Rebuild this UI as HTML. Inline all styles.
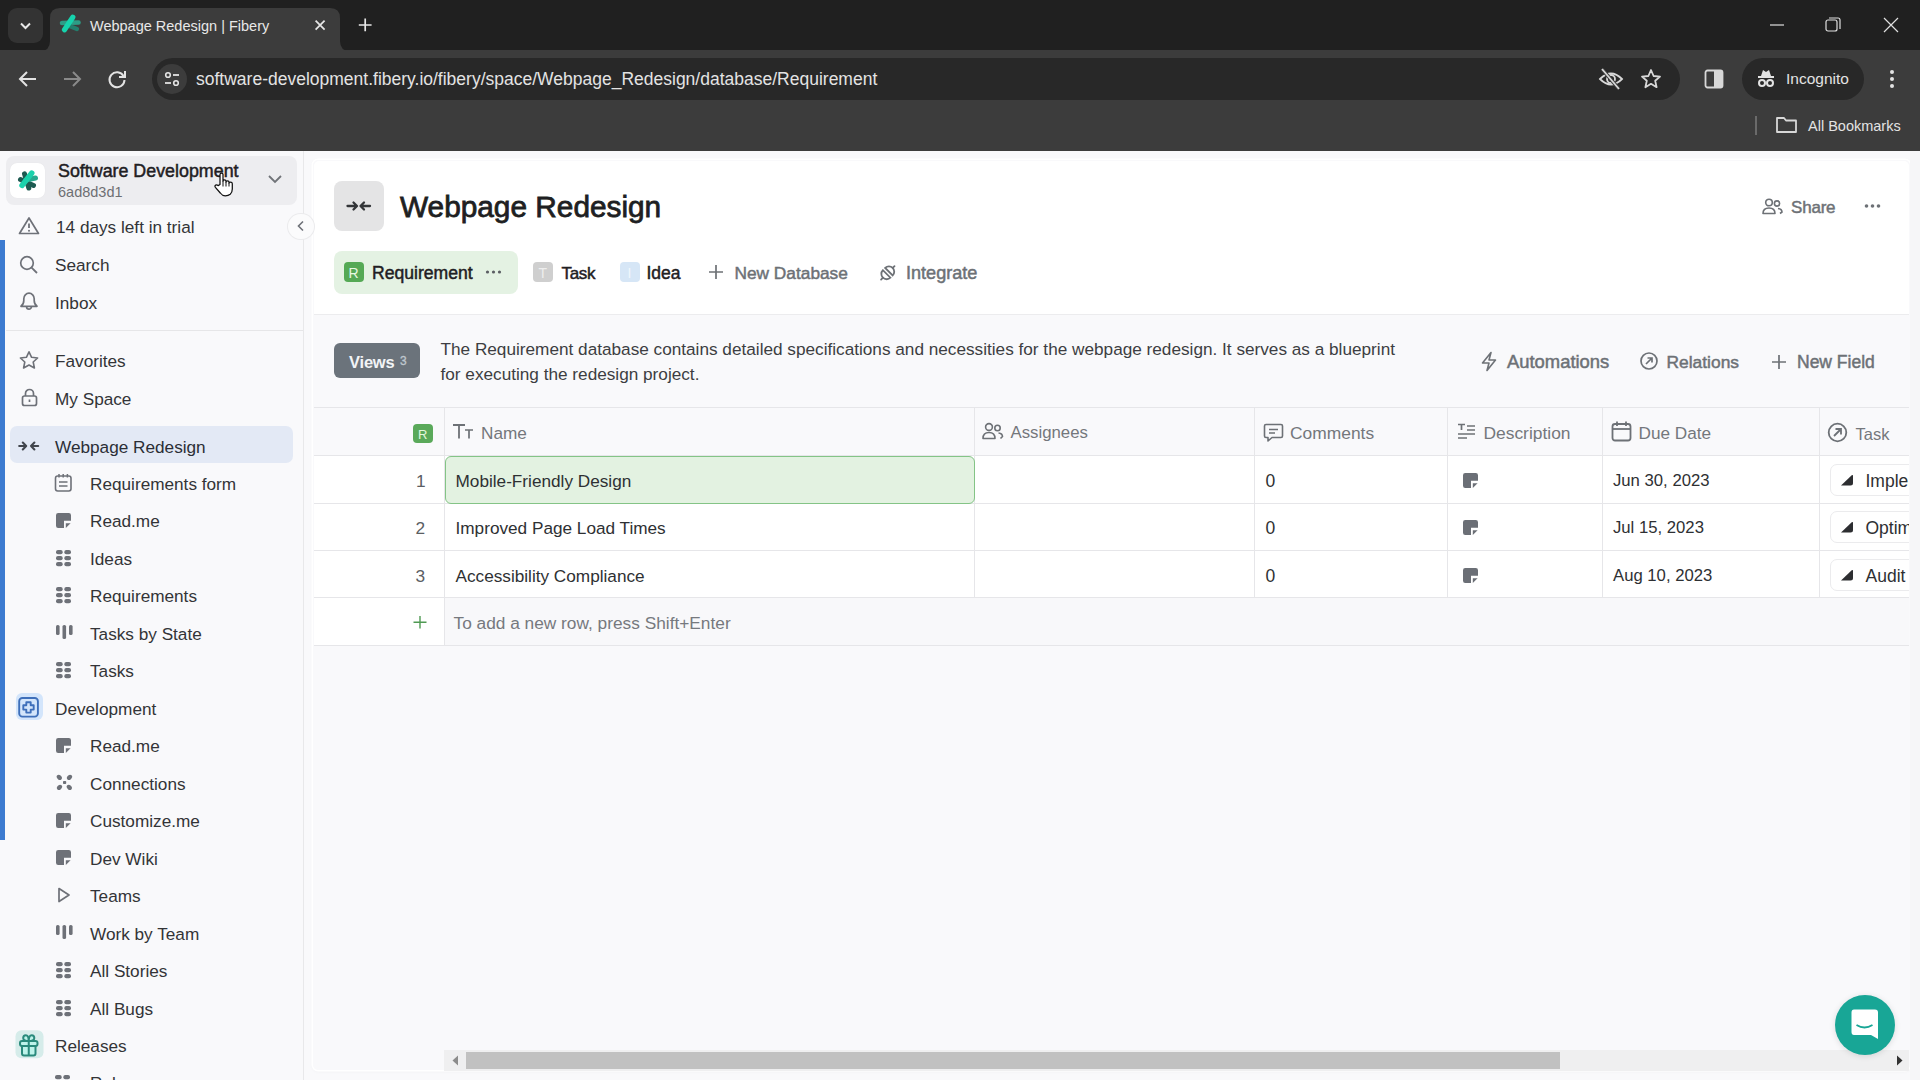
<!DOCTYPE html>
<html><head><meta charset="utf-8"><style>
html,body{margin:0;padding:0;width:1920px;height:1080px;overflow:hidden;background:#f7f7f9}
body{position:relative;font-family:"Liberation Sans", sans-serif}
.t{position:absolute;white-space:nowrap;line-height:1;font-family:"Liberation Sans", sans-serif}
svg{overflow:visible}
</style></head><body>
<div style="position:absolute;left:0px;top:0px;width:1920px;height:151px;background:#202020"></div>
<div style="position:absolute;left:0px;top:50px;width:1920px;height:101px;background:#3c3c3c"></div>
<div style="position:absolute;left:8px;top:8px;width:35px;height:35px;background:#333333;border-radius:9px"></div>
<svg style="position:absolute;left:17px;top:17px" width="17" height="17" viewBox="0 0 17 17"><path d="M4 6.5 L8.5 11 L13 6.5" stroke="#e8e8e8" stroke-width="2" fill="none"/></svg>
<svg style="position:absolute;left:40px;top:8px" width="310" height="43" viewBox="0 0 310 43"><path d="M0 43 Q10 43 10 33 L10 10 Q10 0 20 0 L290 0 Q300 0 300 10 L300 33 Q300 43 310 43 Z" fill="#3c3c3c"/></svg>
<svg style="position:absolute;left:55px;top:10px" width="30" height="30" viewBox="0 0 30 30"><g stroke-linecap="round"><path d="M7 13 L23.5 12.5" stroke="#2d9c86" stroke-width="4.6"/><path d="M13 15.5 L22 19" stroke="#237e6d" stroke-width="4.2"/><path d="M9.5 19.8 L17.8 7.2" stroke="#16d3ad" stroke-width="5.2"/></g></svg>
<div class="t" style="left:90px;top:18.73px;font-size:14.5px;color:#e8e8e8;font-weight:400;letter-spacing:0px;">Webpage Redesign | Fibery</div>
<svg style="position:absolute;left:312px;top:17px" width="16" height="16" viewBox="0 0 16 16"><path d="M3.6 3.6 L12.6 12.6 M12.6 3.6 L3.6 12.6" stroke="#e6e6e6" stroke-width="1.7"/></svg>
<svg style="position:absolute;left:356px;top:16px" width="18" height="18" viewBox="0 0 18 18"><path d="M9.2 2.6 V15.2 M2.8 9 H15.6" stroke="#e6e6e6" stroke-width="1.7"/></svg>
<svg style="position:absolute;left:1768px;top:15px" width="20" height="20" viewBox="0 0 20 20"><path d="M2 10 H16" stroke="#e0e0e0" stroke-width="1.2"/></svg>
<svg style="position:absolute;left:1823px;top:15px" width="20" height="20" viewBox="0 0 20 20"><rect x="3" y="5" width="11" height="11" rx="2" stroke="#e0e0e0" stroke-width="1.2" fill="none"/><path d="M6 3 H15 Q17 3 17 5 V14" stroke="#e0e0e0" stroke-width="1.2" fill="none"/></svg>
<svg style="position:absolute;left:1881px;top:15px" width="20" height="20" viewBox="0 0 20 20"><path d="M3 3 L17 17 M17 3 L3 17" stroke="#e0e0e0" stroke-width="1.2"/></svg>
<svg style="position:absolute;left:17px;top:68px" width="22" height="22" viewBox="0 0 22 22"><path d="M19 11 H4 M10 4 L3 11 L10 18" stroke="#e3e3e3" stroke-width="2" fill="none"/></svg>
<svg style="position:absolute;left:61px;top:68px" width="22" height="22" viewBox="0 0 22 22"><path d="M3 11 H18 M12 4 L19 11 L12 18" stroke="#8a8a8a" stroke-width="2" fill="none"/></svg>
<svg style="position:absolute;left:106px;top:68px" width="22" height="22" viewBox="0 0 22 22"><path d="M17.5 8 A7.5 7.5 0 1 0 18.5 12" stroke="#e3e3e3" stroke-width="2" fill="none"/><path d="M19 3 V9 H13" stroke="#e3e3e3" stroke-width="2" fill="none"/></svg>
<div style="position:absolute;left:152px;top:58px;width:1528px;height:42px;background:#282828;border-radius:21px"></div>
<div style="position:absolute;left:157px;top:64px;width:30px;height:30px;background:#3c3c3c;border-radius:15px"></div>
<svg style="position:absolute;left:162px;top:69px" width="20" height="20" viewBox="0 0 20 20"><circle cx="6" cy="6" r="2.3" stroke="#e3e3e3" stroke-width="1.6" fill="none"/><path d="M11 6 H17" stroke="#e3e3e3" stroke-width="1.8"/><circle cx="14" cy="14" r="2.3" stroke="#e3e3e3" stroke-width="1.6" fill="none"/><path d="M3 14 H9" stroke="#e3e3e3" stroke-width="1.8"/></svg>
<div class="t" style="left:196px;top:70.69px;font-size:17.5px;color:#e3e3e3;font-weight:400;letter-spacing:0px;">software-development.fibery.io/fibery/space/Webpage_Redesign/database/Requirement</div>
<svg style="position:absolute;left:1598px;top:67px" width="26" height="24" viewBox="0 0 26 24"><path d="M2 12 Q13 1 24 12 Q13 23 2 12Z" stroke="#d8d8d8" stroke-width="1.8" fill="none"/><circle cx="13" cy="12" r="4" stroke="#d8d8d8" stroke-width="1.8" fill="none"/><path d="M4 2 L21 22" stroke="#3c3c3c" stroke-width="3.5"/><path d="M4 2 L21 22" stroke="#d8d8d8" stroke-width="1.8"/></svg>
<svg style="position:absolute;left:1640px;top:68px" width="22" height="22" viewBox="0 0 22 22"><path d="M11 2 L13.6 8 L20 8.6 L15.2 12.8 L16.6 19.2 L11 15.8 L5.4 19.2 L6.8 12.8 L2 8.6 L8.4 8 Z" stroke="#d8d8d8" stroke-width="1.8" fill="none" stroke-linejoin="round"/></svg>
<svg style="position:absolute;left:1704px;top:69px" width="20" height="20" viewBox="0 0 20 20"><rect x="1.5" y="1.5" width="17" height="17" rx="2" stroke="#d8d8d8" stroke-width="1.8" fill="none"/><rect x="10" y="2" width="8" height="16" fill="#d8d8d8"/></svg>
<div style="position:absolute;left:1742px;top:58px;width:122px;height:42px;background:#282828;border-radius:21px"></div>
<svg style="position:absolute;left:1755px;top:68px" width="22" height="22" viewBox="0 0 22 22"><path d="M3 9 H19" stroke="#e3e3e3" stroke-width="2"/><path d="M6 8 L8 2 L11 4 L14 2 L16 8Z" fill="#e3e3e3"/><circle cx="7" cy="15" r="3" stroke="#e3e3e3" stroke-width="2" fill="none"/><circle cx="15" cy="15" r="3" stroke="#e3e3e3" stroke-width="2" fill="none"/></svg>
<div class="t" style="left:1786px;top:71.38px;font-size:15.5px;color:#e3e3e3;font-weight:400;letter-spacing:0px;">Incognito</div>
<svg style="position:absolute;left:1882px;top:68px" width="20" height="22" viewBox="0 0 20 22"><circle cx="10" cy="4" r="2" fill="#e3e3e3"/><circle cx="10" cy="11" r="2" fill="#e3e3e3"/><circle cx="10" cy="18" r="2" fill="#e3e3e3"/></svg>
<div style="position:absolute;left:1755px;top:116px;width:2px;height:19px;background:#6a6a6a"></div>
<svg style="position:absolute;left:1775px;top:115px" width="24" height="20" viewBox="0 0 24 20"><path d="M2 3 H9 L11 5.5 H21 V17 H2 Z" stroke="#d8d8d8" stroke-width="1.8" fill="none" stroke-linejoin="round"/></svg>
<div class="t" style="left:1808px;top:118.73px;font-size:14.5px;color:#e3e3e3;font-weight:400;letter-spacing:0px;">All Bookmarks</div>
<div style="position:absolute;left:0px;top:151px;width:1920px;height:929px;background:#f9f9fb"></div>
<div style="position:absolute;left:303px;top:151px;width:1px;height:929px;background:#e8e8ea"></div>
<div style="position:absolute;left:0px;top:240px;width:5px;height:600px;background:#3d7bd0"></div>
<div style="position:absolute;left:6px;top:156px;width:291px;height:49px;background:#ededf0;border-radius:8px"></div>
<div style="position:absolute;left:10px;top:163px;width:35px;height:35px;background:#ffffff;border-radius:7px;box-shadow:0 0 1px rgba(0,0,0,0.08)"></div>
<svg style="position:absolute;left:10px;top:163px" width="35" height="35" viewBox="0 0 35 35"><g stroke-linecap="round"><path d="M10.5 16.5 L23.5 22.5" stroke="#1d5a51" stroke-width="5"/><path d="M14.5 10.8 L18.8 25" stroke="#1d5a51" stroke-width="5"/><path d="M16 17 L25.5 15" stroke="#27a98f" stroke-width="5"/><path d="M12 22.5 L21.8 10" stroke="#1ad2ac" stroke-width="5.4"/></g></svg>
<div class="t" style="left:58px;top:163.19px;font-size:17.85px;color:#1f2023;font-weight:400;letter-spacing:0px;-webkit-text-stroke:0.48px #1f2023;">Software Development</div>
<div class="t" style="left:58px;top:184.73px;font-size:14.5px;color:#6d6f73;font-weight:400;letter-spacing:0px;">6ad8d3d1</div>
<svg style="position:absolute;left:266px;top:173px" width="18" height="12" viewBox="0 0 18 12"><path d="M3 3 L9 9 L15 3" stroke="#707378" stroke-width="1.8" fill="none"/></svg>
<svg style="position:absolute;left:18px;top:216px" width="22" height="19" viewBox="0 0 22 19"><path d="M11 2 L20.5 17.5 H1.5 Z" stroke="#6e7178" stroke-width="1.7" fill="none" stroke-linejoin="round"/><path d="M11 7.5 V12" stroke="#6e7178" stroke-width="1.8"/><circle cx="11" cy="14.8" r="1" fill="#6e7178"/></svg>
<div class="t" style="left:56px;top:219.24px;font-size:17.2px;color:#333437;font-weight:400;letter-spacing:0px;">14 days left in trial</div>
<svg style="position:absolute;left:19px;top:255px" width="20" height="19" viewBox="0 0 20 19"><circle cx="8" cy="8" r="6.3" stroke="#6e7178" stroke-width="1.7" fill="none"/><path d="M12.6 12.6 L18 18" stroke="#6e7178" stroke-width="1.8"/></svg>
<div class="t" style="left:55px;top:257.14px;font-size:17.2px;color:#333437;font-weight:400;letter-spacing:0px;">Search</div>
<svg style="position:absolute;left:19px;top:291px" width="20" height="20" viewBox="0 0 20 20"><path d="M2 15.3 Q4.8 13.2 4.8 9.5 V7.8 A5.2 5.6 0 0 1 15.2 7.8 V9.5 Q15.2 13.2 18 15.3 Z" stroke="#6e7178" stroke-width="1.7" fill="none" stroke-linejoin="round"/><path d="M7.6 15.8 A2.4 2.4 0 0 0 12.4 15.8" stroke="#6e7178" stroke-width="1.7" fill="none"/></svg>
<div class="t" style="left:55px;top:294.94px;font-size:17.2px;color:#333437;font-weight:400;letter-spacing:0px;">Inbox</div>
<div style="position:absolute;left:6px;top:330px;width:297px;height:1px;background:#e6e6e8"></div>
<svg style="position:absolute;left:18px;top:350px" width="22" height="20" viewBox="0 0 22 20"><path d="M11 1.8 L13.6 7.3 L19.6 8 L15.2 12 L16.4 18 L11 15 L5.6 18 L6.8 12 L2.4 8 L8.4 7.3 Z" stroke="#6e7178" stroke-width="1.6" fill="none" stroke-linejoin="round"/></svg>
<div class="t" style="left:55px;top:353.44px;font-size:17.2px;color:#333437;font-weight:400;letter-spacing:0px;">Favorites</div>
<svg style="position:absolute;left:20px;top:387px" width="19" height="20" viewBox="0 0 19 20"><path d="M5.5 9 V6.5 A4 4 0 0 1 13.5 6.5 V9" stroke="#6e7178" stroke-width="1.7" fill="none"/><rect x="2.5" y="9" width="14" height="9.5" rx="2" stroke="#6e7178" stroke-width="1.7" fill="none"/><path d="M9.5 12.5 V15" stroke="#6e7178" stroke-width="1.7"/></svg>
<div class="t" style="left:55px;top:391.04px;font-size:17.2px;color:#333437;font-weight:400;letter-spacing:0px;">My Space</div>
<div style="position:absolute;left:10px;top:426px;width:283px;height:37px;background:#e3e9f5;border-radius:7px"></div>
<svg style="position:absolute;left:17px;top:438px" width="26" height="16" viewBox="0 0 26 16"><g stroke="#42464d" stroke-width="2.1" fill="none" stroke-linecap="round" stroke-linejoin="round"><path d="M2.2 8 H9 M5.8 4.6 L9.2 8 L5.8 11.4"/><path d="M21.2 8 H14 M17.4 4.6 L14 8 L17.4 11.4"/></g></svg>
<div class="t" style="left:55px;top:438.64px;font-size:17.2px;color:#2b2e35;font-weight:400;letter-spacing:0px;">Webpage Redesign</div>
<div class="t" style="left:90px;top:475.64px;font-size:17.2px;color:#333437;font-weight:400;letter-spacing:0px;">Requirements form</div>
<div class="t" style="left:90px;top:513.14px;font-size:17.2px;color:#333437;font-weight:400;letter-spacing:0px;">Read.me</div>
<div class="t" style="left:90px;top:550.64px;font-size:17.2px;color:#333437;font-weight:400;letter-spacing:0px;">Ideas</div>
<div class="t" style="left:90px;top:588.14px;font-size:17.2px;color:#333437;font-weight:400;letter-spacing:0px;">Requirements</div>
<div class="t" style="left:90px;top:625.64px;font-size:17.2px;color:#333437;font-weight:400;letter-spacing:0px;">Tasks by State</div>
<div class="t" style="left:90px;top:663.14px;font-size:17.2px;color:#333437;font-weight:400;letter-spacing:0px;">Tasks</div>
<svg style="position:absolute;left:54px;top:473px" width="19" height="20" viewBox="0 0 19 20"><rect x="1.5" y="3" width="15.5" height="15" rx="2.2" stroke="#6e7178" stroke-width="1.6" fill="none"/><path d="M5 1 V4.5 M9.2 1 V4.5 M13.4 1 V4.5" stroke="#6e7178" stroke-width="1.5"/><path d="M5 9 H13.5 M5 13 H13.5" stroke="#6e7178" stroke-width="1.6"/></svg>
<svg style="position:absolute;left:56px;top:513px" width="16" height="16" viewBox="0 0 16 16"><path d="M2.2 0 H12.8 Q15 0 15 2.2 V7.8 H8 V15 H2.2 Q0 15 0 12.8 V2.2 Q0 0 2.2 0 Z" fill="#6e7178"/><path d="M9.8 10.2 H14.6 L9.8 15 Z" fill="#6e7178"/></svg>
<svg style="position:absolute;left:56px;top:550px" width="17" height="18" viewBox="0 0 17 18"><rect x="0.0" y="0" width="6.7" height="4.3" rx="2" fill="#6e7178"/><rect x="8.3" y="0" width="6.7" height="4.3" rx="2" fill="#6e7178"/><rect x="0.0" y="6" width="6.7" height="4.3" rx="2" fill="#6e7178"/><rect x="8.3" y="6" width="6.7" height="4.3" rx="2" fill="#6e7178"/><rect x="0.0" y="12" width="6.7" height="4.3" rx="2" fill="#6e7178"/><rect x="8.3" y="12" width="6.7" height="4.3" rx="2" fill="#6e7178"/></svg>
<svg style="position:absolute;left:56px;top:587px" width="17" height="18" viewBox="0 0 17 18"><rect x="0.0" y="0" width="6.7" height="4.3" rx="2" fill="#6e7178"/><rect x="8.3" y="0" width="6.7" height="4.3" rx="2" fill="#6e7178"/><rect x="0.0" y="6" width="6.7" height="4.3" rx="2" fill="#6e7178"/><rect x="8.3" y="6" width="6.7" height="4.3" rx="2" fill="#6e7178"/><rect x="0.0" y="12" width="6.7" height="4.3" rx="2" fill="#6e7178"/><rect x="8.3" y="12" width="6.7" height="4.3" rx="2" fill="#6e7178"/></svg>
<svg style="position:absolute;left:56px;top:625px" width="17" height="18" viewBox="0 0 17 18"><rect x="0" y="0" width="3.6" height="10" rx="1.6" fill="#6e7178"/><rect x="6.5" y="0" width="3.6" height="14" rx="1.6" fill="#6e7178"/><rect x="13" y="0" width="3.6" height="10" rx="1.6" fill="#6e7178"/></svg>
<svg style="position:absolute;left:56px;top:662px" width="17" height="18" viewBox="0 0 17 18"><rect x="0.0" y="0" width="6.7" height="4.3" rx="2" fill="#6e7178"/><rect x="8.3" y="0" width="6.7" height="4.3" rx="2" fill="#6e7178"/><rect x="0.0" y="6" width="6.7" height="4.3" rx="2" fill="#6e7178"/><rect x="8.3" y="6" width="6.7" height="4.3" rx="2" fill="#6e7178"/><rect x="0.0" y="12" width="6.7" height="4.3" rx="2" fill="#6e7178"/><rect x="8.3" y="12" width="6.7" height="4.3" rx="2" fill="#6e7178"/></svg>
<div style="position:absolute;left:16px;top:693px;width:27px;height:27px;background:#d3e5fb;border-radius:6px"></div>
<svg style="position:absolute;left:16px;top:693px" width="27" height="27" viewBox="0 0 27 27"><rect x="3.2" y="5" width="18.7" height="18.6" rx="3.2" stroke="#3e6fba" stroke-width="1.9" fill="none"/><path transform="translate(12.5 14.4)" d="M-2.2 -5.2 H2.2 V-2.2 H5.2 V2.2 H2.2 V5.2 H-2.2 V2.2 H-5.2 V-2.2 H-2.2 Z" stroke="#3e6fba" stroke-width="1.9" fill="none" stroke-linejoin="round"/></svg>
<div class="t" style="left:55px;top:700.84px;font-size:17.2px;color:#333437;font-weight:400;letter-spacing:0px;">Development</div>
<div class="t" style="left:90px;top:738.14px;font-size:17.2px;color:#333437;font-weight:400;letter-spacing:0px;">Read.me</div>
<svg style="position:absolute;left:56px;top:738px" width="16" height="16" viewBox="0 0 16 16"><path d="M2.2 0 H12.8 Q15 0 15 2.2 V7.8 H8 V15 H2.2 Q0 15 0 12.8 V2.2 Q0 0 2.2 0 Z" fill="#6e7178"/><path d="M9.8 10.2 H14.6 L9.8 15 Z" fill="#6e7178"/></svg>
<div class="t" style="left:90px;top:775.64px;font-size:17.2px;color:#333437;font-weight:400;letter-spacing:0px;">Connections</div>
<svg style="position:absolute;left:56px;top:774px" width="17" height="17" viewBox="0 0 17 17"><g fill="#6e7178"><ellipse cx="3.3" cy="3.4" rx="2.9" ry="2.2" transform="rotate(45 3.3 3.4)"/><ellipse cx="13.5" cy="3.4" rx="2.9" ry="2.2" transform="rotate(-45 13.5 3.4)"/><ellipse cx="3.5" cy="13.4" rx="2.9" ry="2.2" transform="rotate(-45 3.5 13.4)"/><ellipse cx="13.3" cy="13.4" rx="2.9" ry="2.2" transform="rotate(45 13.3 13.4)"/><rect x="7" y="6.9" width="3.2" height="3.2" rx="0.8"/></g></svg>
<div class="t" style="left:90px;top:813.14px;font-size:17.2px;color:#333437;font-weight:400;letter-spacing:0px;">Customize.me</div>
<svg style="position:absolute;left:56px;top:813px" width="16" height="16" viewBox="0 0 16 16"><path d="M2.2 0 H12.8 Q15 0 15 2.2 V7.8 H8 V15 H2.2 Q0 15 0 12.8 V2.2 Q0 0 2.2 0 Z" fill="#6e7178"/><path d="M9.8 10.2 H14.6 L9.8 15 Z" fill="#6e7178"/></svg>
<div class="t" style="left:90px;top:850.64px;font-size:17.2px;color:#333437;font-weight:400;letter-spacing:0px;">Dev Wiki</div>
<svg style="position:absolute;left:56px;top:850px" width="16" height="16" viewBox="0 0 16 16"><path d="M2.2 0 H12.8 Q15 0 15 2.2 V7.8 H8 V15 H2.2 Q0 15 0 12.8 V2.2 Q0 0 2.2 0 Z" fill="#6e7178"/><path d="M9.8 10.2 H14.6 L9.8 15 Z" fill="#6e7178"/></svg>
<div class="t" style="left:90px;top:888.14px;font-size:17.2px;color:#333437;font-weight:400;letter-spacing:0px;">Teams</div>
<svg style="position:absolute;left:56px;top:886px" width="16" height="18" viewBox="0 0 16 18"><path d="M3 2.5 L13 9 L3 15.5 Z" stroke="#6e7178" stroke-width="1.7" fill="none" stroke-linejoin="round"/></svg>
<div class="t" style="left:90px;top:925.64px;font-size:17.2px;color:#333437;font-weight:400;letter-spacing:0px;">Work by Team</div>
<svg style="position:absolute;left:56px;top:925px" width="17" height="18" viewBox="0 0 17 18"><rect x="0" y="0" width="3.6" height="10" rx="1.6" fill="#6e7178"/><rect x="6.5" y="0" width="3.6" height="14" rx="1.6" fill="#6e7178"/><rect x="13" y="0" width="3.6" height="10" rx="1.6" fill="#6e7178"/></svg>
<div class="t" style="left:90px;top:963.14px;font-size:17.2px;color:#333437;font-weight:400;letter-spacing:0px;">All Stories</div>
<svg style="position:absolute;left:56px;top:962px" width="17" height="18" viewBox="0 0 17 18"><rect x="0.0" y="0" width="6.7" height="4.3" rx="2" fill="#6e7178"/><rect x="8.3" y="0" width="6.7" height="4.3" rx="2" fill="#6e7178"/><rect x="0.0" y="6" width="6.7" height="4.3" rx="2" fill="#6e7178"/><rect x="8.3" y="6" width="6.7" height="4.3" rx="2" fill="#6e7178"/><rect x="0.0" y="12" width="6.7" height="4.3" rx="2" fill="#6e7178"/><rect x="8.3" y="12" width="6.7" height="4.3" rx="2" fill="#6e7178"/></svg>
<div class="t" style="left:90px;top:1000.64px;font-size:17.2px;color:#333437;font-weight:400;letter-spacing:0px;">All Bugs</div>
<svg style="position:absolute;left:56px;top:1000px" width="17" height="18" viewBox="0 0 17 18"><rect x="0.0" y="0" width="6.7" height="4.3" rx="2" fill="#6e7178"/><rect x="8.3" y="0" width="6.7" height="4.3" rx="2" fill="#6e7178"/><rect x="0.0" y="6" width="6.7" height="4.3" rx="2" fill="#6e7178"/><rect x="8.3" y="6" width="6.7" height="4.3" rx="2" fill="#6e7178"/><rect x="0.0" y="12" width="6.7" height="4.3" rx="2" fill="#6e7178"/><rect x="8.3" y="12" width="6.7" height="4.3" rx="2" fill="#6e7178"/></svg>
<svg style="position:absolute;left:12px;top:1027px" width="35" height="35" viewBox="0 0 35 35"><rect x="3.5" y="3.2" width="28" height="28" rx="6" fill="#d6ecea"/><g stroke="#2a8a7c" stroke-width="2" fill="#bdf3ea" stroke-linejoin="round"><path d="M10 19 V26.5 Q10 28.5 12 28.5 H21.5 Q23.5 28.5 23.5 26.5 V19"/><rect x="8" y="14" width="17.5" height="5" rx="2"/><path d="M16.75 14 V28.5"/><path d="M16.75 14 Q16.75 8.2 13.8 8.2 Q11.2 8.2 11.2 11 Q11.2 14 16.75 14"/><path d="M16.75 14 Q16.75 8.2 19.7 8.2 Q22.3 8.2 22.3 11 Q22.3 14 16.75 14"/></g></svg>
<div class="t" style="left:55px;top:1038.14px;font-size:17.2px;color:#333437;font-weight:400;letter-spacing:0px;">Releases</div>
<svg style="position:absolute;left:55px;top:1075px" width="17" height="18" viewBox="0 0 17 18"><rect x="0.0" y="0" width="6.7" height="4.3" rx="2" fill="#6e7178"/><rect x="8.3" y="0" width="6.7" height="4.3" rx="2" fill="#6e7178"/><rect x="0.0" y="6" width="6.7" height="4.3" rx="2" fill="#6e7178"/><rect x="8.3" y="6" width="6.7" height="4.3" rx="2" fill="#6e7178"/><rect x="0.0" y="12" width="6.7" height="4.3" rx="2" fill="#6e7178"/><rect x="8.3" y="12" width="6.7" height="4.3" rx="2" fill="#6e7178"/></svg>
<div class="t" style="left:90px;top:1075.44px;font-size:17.2px;color:#333437;font-weight:400;letter-spacing:0px;">Releases</div>
<div style="position:absolute;left:313px;top:160px;width:1597px;height:910px;background:#f9f9fb;border-radius:5px;box-shadow:0 0 0 1.5px #ffffff,0 1px 4px rgba(0,0,0,0.05)"></div>
<div style="position:absolute;left:314px;top:161px;width:1595px;height:153px;background:#ffffff;border-radius:5px 5px 0 0;border-bottom:1px solid #ececee"></div>
<div style="position:absolute;left:334px;top:181px;width:50px;height:50px;background:#e4e4e5;border-radius:8px"></div>
<svg style="position:absolute;left:344px;top:198px" width="30" height="16" viewBox="0 0 30 16"><path d="M3.5 8 H12.5 M9.5 4.5 L13 8 L9.5 11.5" stroke="#333538" stroke-width="2.3" fill="none" stroke-linecap="round" stroke-linejoin="round"/><path d="M26 8 H17 M20 4.5 L16.5 8 L20 11.5" stroke="#333538" stroke-width="2.3" fill="none" stroke-linecap="round" stroke-linejoin="round"/></svg>
<div class="t" style="left:400px;top:191.97px;font-size:29.8px;color:#1e1f22;font-weight:400;letter-spacing:0px;-webkit-text-stroke:0.80px #1e1f22;">Webpage Redesign</div>
<svg style="position:absolute;left:1762px;top:198px" width="23" height="17" viewBox="0 0 23 17"><circle cx="7" cy="4.5" r="3.3" stroke="#6d7176" stroke-width="1.6" fill="none"/><path d="M1 15.5 Q1 10 7 10 Q13 10 13 15.5 Z" stroke="#6d7176" stroke-width="1.6" fill="none" stroke-linejoin="round"/><circle cx="15" cy="5.5" r="2.6" stroke="#6d7176" stroke-width="1.6" fill="none"/><path d="M16 10.5 Q20 11 20 14 L18 15.5" stroke="#6d7176" stroke-width="1.6" fill="none"/></svg>
<div class="t" style="left:1791px;top:198.61px;font-size:17px;color:#6d7176;font-weight:400;letter-spacing:-0.2px;-webkit-text-stroke:0.46px #6d7176;">Share</div>
<svg style="position:absolute;left:1864px;top:202px" width="18" height="8" viewBox="0 0 18 8"><circle cx="2.5" cy="4" r="1.8" fill="#6d7176"/><circle cx="8.5" cy="4" r="1.8" fill="#6d7176"/><circle cx="14.5" cy="4" r="1.8" fill="#6d7176"/></svg>
<div style="position:absolute;left:334px;top:251px;width:184px;height:43px;background:#e4f2e3;border-radius:8px"></div>
<div style="position:absolute;left:344px;top:262px;width:20px;height:20px;background:#55a955;border-radius:4px"></div>
<div class="t" style="left:348.5px;top:266.15px;font-size:14px;color:#e8f8e2;font-weight:400;letter-spacing:0px;">R</div>
<div class="t" style="left:372px;top:264.60px;font-size:17.6px;color:#1f2023;font-weight:400;letter-spacing:0px;-webkit-text-stroke:0.48px #1f2023;">Requirement</div>
<svg style="position:absolute;left:485px;top:268px" width="18" height="8" viewBox="0 0 18 8"><circle cx="2.5" cy="4" r="1.6" fill="#5b5e63"/><circle cx="8.5" cy="4" r="1.6" fill="#5b5e63"/><circle cx="14.5" cy="4" r="1.6" fill="#5b5e63"/></svg>
<div style="position:absolute;left:533px;top:262px;width:20px;height:20px;background:#cfcfcf;border-radius:4px"></div>
<div class="t" style="left:538.5px;top:266.15px;font-size:14px;color:#eeeeee;font-weight:400;letter-spacing:0px;">T</div>
<div class="t" style="left:561.5px;top:265.11px;font-size:17px;color:#1f2023;font-weight:400;letter-spacing:-0.3px;-webkit-text-stroke:0.46px #1f2023;">Task</div>
<div style="position:absolute;left:620px;top:262px;width:20px;height:20px;background:#d6e6f6;border-radius:4px"></div>
<div class="t" style="left:627.5px;top:266.15px;font-size:14px;color:#f0f6fc;font-weight:400;letter-spacing:0px;">I</div>
<div class="t" style="left:646.5px;top:264.69px;font-size:17.5px;color:#1f2023;font-weight:400;letter-spacing:0px;-webkit-text-stroke:0.47px #1f2023;">Idea</div>
<svg style="position:absolute;left:708px;top:264px" width="16" height="16" viewBox="0 0 16 16"><path d="M8 1 V15 M1 8 H15" stroke="#6d7176" stroke-width="1.7"/></svg>
<div class="t" style="left:734.5px;top:264.86px;font-size:17.3px;color:#6d7176;font-weight:400;letter-spacing:0px;-webkit-text-stroke:0.47px #6d7176;">New Database</div>
<svg style="position:absolute;left:870px;top:256px" width="35" height="32" viewBox="0 0 35 32"><g transform="translate(17.8 16.8) rotate(-45)" stroke="#6d7176" stroke-width="1.8" fill="none" stroke-linecap="round"><path d="M-1.6 -5.3 A5.3 5.3 0 0 0 -1.6 5.3 Z"/><path d="M1.6 -5.3 A5.3 5.3 0 0 1 1.6 5.3 Z"/><path d="M-6.9 0 H-9.5 M6.9 0 H9.5"/></g></svg>
<div class="t" style="left:906px;top:264.18px;font-size:18.1px;color:#6d7176;font-weight:400;letter-spacing:0px;-webkit-text-stroke:0.49px #6d7176;">Integrate</div>
<div style="position:absolute;left:334px;top:343px;width:86px;height:35px;background:#6b737b;border-radius:6px"></div>
<div class="t" style="left:349px;top:353.83px;font-size:16.5px;color:#f2f4f6;font-weight:700;letter-spacing:-0.2px;">Views</div>
<div class="t" style="left:400px;top:355.34px;font-size:12px;color:#bfc7ce;font-weight:400;letter-spacing:0px;-webkit-text-stroke:0.32px #bfc7ce;">3</div>
<div class="t" style="left:440.5px;top:341.44px;font-size:17.2px;color:#3d3e42;font-weight:400;letter-spacing:0px;">The Requirement database contains detailed specifications and necessities for the webpage redesign. It serves as a blueprint</div>
<div class="t" style="left:440.5px;top:366.44px;font-size:17.2px;color:#3d3e42;font-weight:400;letter-spacing:0px;">for executing the redesign project.</div>
<svg style="position:absolute;left:1480px;top:351px" width="18" height="21" viewBox="0 0 18 21"><path d="M11 1.5 L2.5 12 H9 L7 19.5 L15.5 9 H9 Z" stroke="#6d7176" stroke-width="1.6" fill="none" stroke-linejoin="round"/></svg>
<div class="t" style="left:1507px;top:352.72px;font-size:18.4px;color:#6d7176;font-weight:400;letter-spacing:0px;-webkit-text-stroke:0.50px #6d7176;">Automations</div>
<svg style="position:absolute;left:1639px;top:351px" width="20" height="20" viewBox="0 0 20 20"><circle cx="10" cy="10" r="8" stroke="#6d7176" stroke-width="1.7" fill="none"/><path d="M7 13 L13 7 M8.5 7 H13 V11.5" stroke="#6d7176" stroke-width="1.7" fill="none"/></svg>
<div class="t" style="left:1666.5px;top:353.57px;font-size:17.4px;color:#6d7176;font-weight:400;letter-spacing:0px;-webkit-text-stroke:0.47px #6d7176;">Relations</div>
<svg style="position:absolute;left:1771px;top:354px" width="16" height="16" viewBox="0 0 16 16"><path d="M8 1 V15 M1 8 H15" stroke="#6d7176" stroke-width="1.7"/></svg>
<div class="t" style="left:1797px;top:354.39px;font-size:17.5px;color:#6d7176;font-weight:400;letter-spacing:0px;-webkit-text-stroke:0.47px #6d7176;">New Field</div>
<div style="position:absolute;left:314px;top:407px;width:1595px;height:240px;overflow:hidden">
<div style="position:absolute;left:0px;top:0px;width:1595px;height:1px;background:#e6e6e9"></div>
<div style="position:absolute;left:0px;top:49px;width:1595px;height:142px;background:#ffffff"></div>
<div style="position:absolute;left:0px;top:48px;width:1595px;height:1px;background:#e6e6e9"></div>
<div style="position:absolute;left:0px;top:96px;width:1595px;height:1px;background:#e6e6e9"></div>
<div style="position:absolute;left:0px;top:143px;width:1595px;height:1px;background:#e6e6e9"></div>
<div style="position:absolute;left:0px;top:190px;width:1595px;height:1px;background:#e6e6e9"></div>
<div style="position:absolute;left:0px;top:238px;width:1595px;height:1px;background:#e6e6e9"></div>
<div style="position:absolute;left:130px;top:0px;width:1px;height:191px;background:#e6e6e9"></div>
<div style="position:absolute;left:660px;top:0px;width:1px;height:191px;background:#e6e6e9"></div>
<div style="position:absolute;left:940px;top:0px;width:1px;height:191px;background:#e6e6e9"></div>
<div style="position:absolute;left:1133px;top:0px;width:1px;height:191px;background:#e6e6e9"></div>
<div style="position:absolute;left:1288px;top:0px;width:1px;height:191px;background:#e6e6e9"></div>
<div style="position:absolute;left:1505px;top:0px;width:1px;height:191px;background:#e6e6e9"></div>
<div style="position:absolute;left:130px;top:191px;width:1px;height:47px;background:#e6e6e9"></div>
<div style="position:absolute;left:99px;top:17px;width:20px;height:19px;background:#5aa95a;border-radius:4px"></div>
<div class="t" style="left:104px;top:21.00px;font-size:13px;color:#e3f7dc;font-weight:400;letter-spacing:0px;">R</div>
<svg style="position:absolute;left:138px;top:16px" width="22" height="17" viewBox="0 0 22 17"><path d="M1 2 H13 M7 2 V15.5" stroke="#6d7176" stroke-width="1.8"/><path d="M13 7 H21 M17 7 V15.5" stroke="#6d7176" stroke-width="1.7"/></svg>
<div class="t" style="left:167px;top:17.94px;font-size:17.2px;color:#74777c;font-weight:400;letter-spacing:0px;">Name</div>
<svg style="position:absolute;left:668px;top:15px" width="23" height="18" viewBox="0 0 23 18"><circle cx="7" cy="5" r="3.4" stroke="#6d7176" stroke-width="1.6" fill="none"/><path d="M1 16.5 Q1 10.5 7 10.5 Q13 10.5 13 16.5 Z" stroke="#6d7176" stroke-width="1.6" fill="none" stroke-linejoin="round"/><circle cx="15.5" cy="6" r="2.7" stroke="#6d7176" stroke-width="1.6" fill="none"/><path d="M16.5 11 Q20.5 11.5 20.5 14.5 L18.5 16.5" stroke="#6d7176" stroke-width="1.6" fill="none"/></svg>
<div class="t" style="left:696.5px;top:18.28px;font-size:16.8px;color:#74777c;font-weight:400;letter-spacing:0px;">Assignees</div>
<svg style="position:absolute;left:949px;top:16px" width="21" height="19" viewBox="0 0 21 19"><path d="M3 1.5 H18 Q19.5 1.5 19.5 3 V13 Q19.5 14.5 18 14.5 H9 L5 18 V14.5 H3 Q1.5 14.5 1.5 13 V3 Q1.5 1.5 3 1.5Z" stroke="#6d7176" stroke-width="1.6" fill="none" stroke-linejoin="round"/><path d="M6 6.5 H15 M6 10 H12" stroke="#6d7176" stroke-width="1.6"/></svg>
<div class="t" style="left:976px;top:17.77px;font-size:17.4px;color:#74777c;font-weight:400;letter-spacing:0px;">Comments</div>
<svg style="position:absolute;left:1143px;top:16px" width="19" height="17" viewBox="0 0 19 17"><path d="M1 1.5 H8 M4.5 1.5 V7" stroke="#6d7176" stroke-width="1.7"/><path d="M10 3 H18 M10 7 H18 M1 11 H18 M1 15 H10" stroke="#6d7176" stroke-width="1.7"/></svg>
<div class="t" style="left:1169.5px;top:17.77px;font-size:17.4px;color:#74777c;font-weight:400;letter-spacing:0px;">Description</div>
<svg style="position:absolute;left:1297px;top:14px" width="21" height="21" viewBox="0 0 21 21"><rect x="1.5" y="3" width="18" height="16.5" rx="2.5" stroke="#6d7176" stroke-width="1.8" fill="none"/><path d="M1.5 8 H19.5" stroke="#6d7176" stroke-width="1.8"/><path d="M6 0.5 V5 M15 0.5 V5" stroke="#6d7176" stroke-width="1.8"/></svg>
<div class="t" style="left:1324.5px;top:17.94px;font-size:17.2px;color:#74777c;font-weight:400;letter-spacing:0px;">Due Date</div>
<svg style="position:absolute;left:1513px;top:15px" width="21" height="21" viewBox="0 0 21 21"><circle cx="10.5" cy="10.5" r="8.8" stroke="#6d7176" stroke-width="1.8" fill="none"/><path d="M7 14 L14 7 M8.5 7 H14 V12.5" stroke="#6d7176" stroke-width="1.8" fill="none"/></svg>
<div class="t" style="left:1541.5px;top:18.53px;font-size:16.5px;color:#74777c;font-weight:400;letter-spacing:0px;">Task</div>
<div style="position:absolute;left:131px;top:49px;width:530px;height:48px;background:#e3f2e1;border:1.5px solid #84c486;border-radius:6px;box-sizing:border-box"></div>
<div class="t" style="left:102px;top:65.96px;font-size:17.3px;color:#5b5e63;font-weight:400;letter-spacing:0px;">1</div>
<div class="t" style="left:141.5px;top:66.04px;font-size:17.2px;color:#2e3033;font-weight:400;letter-spacing:0px;">Mobile-Friendly Design</div>
<div class="t" style="left:951.5px;top:65.79px;font-size:17.5px;color:#2e3033;font-weight:400;letter-spacing:0px;">0</div>
<svg style="position:absolute;left:1149px;top:65.60000000000002px" width="16" height="16" viewBox="0 0 16 16"><path d="M2.2 0 H12.8 Q15 0 15 2.2 V7.8 H8 V15 H2.2 Q0 15 0 12.8 V2.2 Q0 0 2.2 0 Z" fill="#6b6f76"/><path d="M9.8 10.2 H14.6 L9.8 15 Z" fill="#6b6f76"/></svg>
<div class="t" style="left:1299px;top:66.46px;font-size:16.7px;color:#2e3033;font-weight:400;letter-spacing:0px;">Jun 30, 2023</div>
<div style="position:absolute;left:1516px;top:57.30000000000001px;width:120px;height:31.5px;background:#ffffff;border:1px solid #ebebed;border-radius:7px;box-sizing:border-box"></div>
<svg style="position:absolute;left:1526px;top:66.60000000000002px" width="14" height="12" viewBox="0 0 14 12"><path d="M1 11.5 L12 1 Q13 0.5 13 2 V9 Q13 11.5 10.5 11.5 Z" fill="#2d2e31"/></svg>
<div class="t" style="left:1551.5px;top:65.79px;font-size:17.5px;color:#2e3033;font-weight:400;letter-spacing:0px;">Implement</div>
<div class="t" style="left:101.5px;top:112.96px;font-size:17.3px;color:#5b5e63;font-weight:400;letter-spacing:0px;">2</div>
<div class="t" style="left:141.5px;top:113.04px;font-size:17.2px;color:#2e3033;font-weight:400;letter-spacing:0px;">Improved Page Load Times</div>
<div class="t" style="left:951.5px;top:112.79px;font-size:17.5px;color:#2e3033;font-weight:400;letter-spacing:0px;">0</div>
<svg style="position:absolute;left:1149px;top:112.60000000000002px" width="16" height="16" viewBox="0 0 16 16"><path d="M2.2 0 H12.8 Q15 0 15 2.2 V7.8 H8 V15 H2.2 Q0 15 0 12.8 V2.2 Q0 0 2.2 0 Z" fill="#6b6f76"/><path d="M9.8 10.2 H14.6 L9.8 15 Z" fill="#6b6f76"/></svg>
<div class="t" style="left:1299px;top:113.46px;font-size:16.7px;color:#2e3033;font-weight:400;letter-spacing:0px;">Jul 15, 2023</div>
<div style="position:absolute;left:1516px;top:104.30000000000001px;width:120px;height:31.5px;background:#ffffff;border:1px solid #ebebed;border-radius:7px;box-sizing:border-box"></div>
<svg style="position:absolute;left:1526px;top:113.60000000000002px" width="14" height="12" viewBox="0 0 14 12"><path d="M1 11.5 L12 1 Q13 0.5 13 2 V9 Q13 11.5 10.5 11.5 Z" fill="#2d2e31"/></svg>
<div class="t" style="left:1551.5px;top:112.79px;font-size:17.5px;color:#2e3033;font-weight:400;letter-spacing:0px;">Optimize</div>
<div class="t" style="left:101.5px;top:160.96px;font-size:17.3px;color:#5b5e63;font-weight:400;letter-spacing:0px;">3</div>
<div class="t" style="left:141.5px;top:161.04px;font-size:17.2px;color:#2e3033;font-weight:400;letter-spacing:0px;">Accessibility Compliance</div>
<div class="t" style="left:951.5px;top:160.79px;font-size:17.5px;color:#2e3033;font-weight:400;letter-spacing:0px;">0</div>
<svg style="position:absolute;left:1149px;top:160.60000000000002px" width="16" height="16" viewBox="0 0 16 16"><path d="M2.2 0 H12.8 Q15 0 15 2.2 V7.8 H8 V15 H2.2 Q0 15 0 12.8 V2.2 Q0 0 2.2 0 Z" fill="#6b6f76"/><path d="M9.8 10.2 H14.6 L9.8 15 Z" fill="#6b6f76"/></svg>
<div class="t" style="left:1299px;top:161.46px;font-size:16.7px;color:#2e3033;font-weight:400;letter-spacing:0px;">Aug 10, 2023</div>
<div style="position:absolute;left:1516px;top:152.30000000000007px;width:120px;height:31.5px;background:#ffffff;border:1px solid #ebebed;border-radius:7px;box-sizing:border-box"></div>
<svg style="position:absolute;left:1526px;top:161.60000000000002px" width="14" height="12" viewBox="0 0 14 12"><path d="M1 11.5 L12 1 Q13 0.5 13 2 V9 Q13 11.5 10.5 11.5 Z" fill="#2d2e31"/></svg>
<div class="t" style="left:1551.5px;top:160.79px;font-size:17.5px;color:#2e3033;font-weight:400;letter-spacing:0px;">Audit</div>
<div style="position:absolute;left:0px;top:191px;width:130px;height:47px;background:#ffffff"></div>
<div style="position:absolute;left:131px;top:191px;width:1464px;height:47px;background:#f8f8fa"></div>
<svg style="position:absolute;left:99px;top:208px" width="14" height="14" viewBox="0 0 14 14"><path d="M7 1 V13.5 M0.5 7.3 H13.5" stroke="#4f9a53" stroke-width="1.4"/></svg>
<div class="t" style="left:139.5px;top:207.66px;font-size:17.3px;color:#76797e;font-weight:400;letter-spacing:0px;">To add a new row, press Shift+Enter</div>
</div>
<div style="position:absolute;left:1910px;top:151px;width:10px;height:929px;background:#f6f6f8"></div>
<div style="position:absolute;left:444px;top:1050px;width:1465px;height:21px;background:#efeff0"></div>
<div style="position:absolute;left:466px;top:1052px;width:1094px;height:17px;background:#c1c1c1"></div>
<svg style="position:absolute;left:451px;top:1055px" width="8" height="11" viewBox="0 0 8 11"><path d="M7 0.5 V10.5 L1.5 5.5Z" fill="#8c8c8c"/></svg>
<svg style="position:absolute;left:1896px;top:1055px" width="8" height="11" viewBox="0 0 8 11"><path d="M1 0.5 V10.5 L6.5 5.5Z" fill="#333333"/></svg>
<div style="position:absolute;left:1835px;top:995px;width:60px;height:60px;border-radius:30px;background:#18a696;box-shadow:0 1px 6px rgba(0,0,0,0.12)"></div>
<svg style="position:absolute;left:1851px;top:1009px" width="28" height="32" viewBox="0 0 28 32"><path d="M3 0.5 H24 Q27 0.5 27 3.5 V30 L20 26 H3 Q0.5 26 0.5 23 V3.5 Q0.5 0.5 3 0.5Z" fill="#ffffff"/><path d="M5.5 16 Q13.5 21 21.5 16" stroke="#18a696" stroke-width="1.8" fill="none"/></svg>
<svg style="position:absolute;left:213px;top:172px" width="22" height="26" viewBox="0 0 22 26"><path d="M7 12.5 V2.6 Q7 1 8.5 1 Q10 1 10 2.6 V9 Q10 7.8 11.5 7.8 Q13 7.8 13 9.3 V10 Q13 8.8 14.5 8.8 Q16 8.8 16 10.3 V11 Q16 10 17.5 10 Q19.3 10 19.3 11.8 V17 Q19.3 20.5 17.2 22.3 Q15.3 23.8 12.3 23.8 Q9.3 23.8 7.3 21 L2.4 15.4 Q1.3 14 2.7 13.1 Q3.9 12.4 5.1 13.6 Z" fill="#ffffff" stroke="#111" stroke-width="1.25" stroke-linejoin="round"/><path d="M10 9 V14.5 M13 10 V14.5 M16 11 V14.5" stroke="#111" stroke-width="1"/></svg>
<div style="position:absolute;left:288px;top:213.5px;width:25.5px;height:25.5px;background:#fbfbfc;border-radius:13px;box-shadow:0 0 0 1px #ebebed"></div>
<svg style="position:absolute;left:294px;top:219px" width="14" height="14" viewBox="0 0 14 14"><path d="M9 2.5 L4.5 7 L9 11.5" stroke="#6e7178" stroke-width="1.6" fill="none"/></svg>
</body></html>
